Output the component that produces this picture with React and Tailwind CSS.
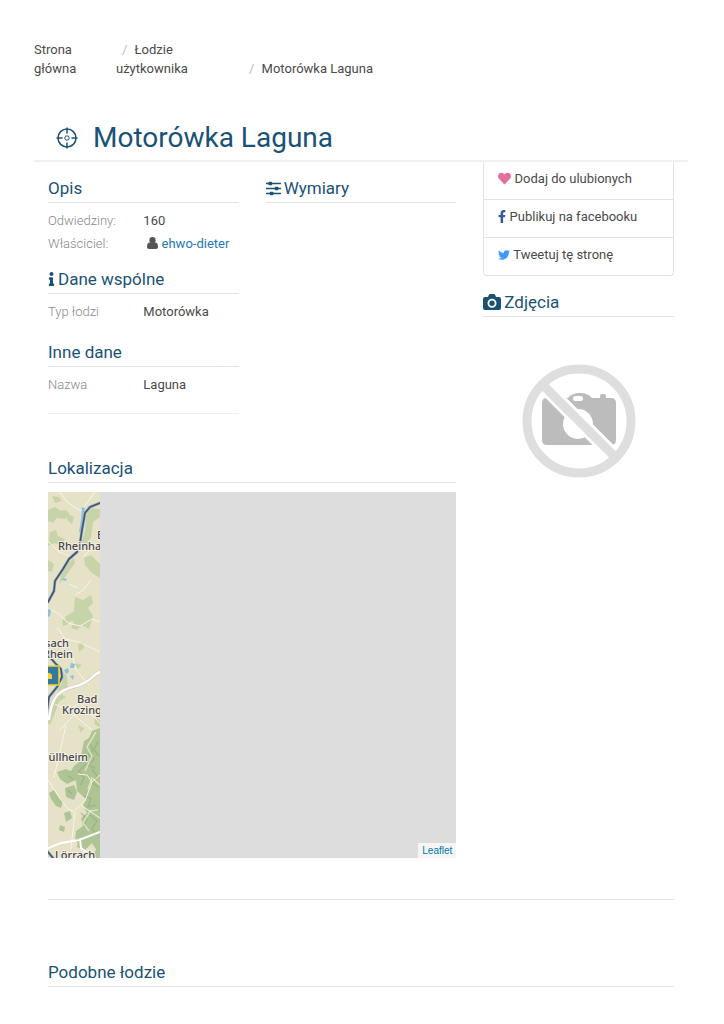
import { FaHeart, FaFacebookF, FaTwitter, FaInfo } from 'react-icons/fa'

const breadcrumbs = [
  { label: 'Strona główna', className: 'w-[82px] pr-6' },
  { label: 'Łodzie użytkownika', className: 'w-[127px] pr-4' },
  { label: 'Motorówka Laguna', className: '' }
]

const shareLinks = [
  { label: 'Dodaj do ulubionych', icon: <FaHeart className="inline size-[13px] align-[-2px] text-[#e0709f]" /> },
  { label: 'Publikuj na facebooku', icon: <FaFacebookF className="inline h-[13px] w-[8px] align-[-2px] text-[#3b5998]" /> },
  { label: 'Tweetuj tę stronę', icon: <FaTwitter className="inline size-3 align-[-2px] text-[#4099ff]" /> }
]

const CrosshairIcon = () => (
  <svg className="size-[22px] shrink-0" viewBox="0 0 22 22" fill="none" stroke="currentColor" strokeWidth="1.5">
    <circle cx="11" cy="11" r="9" />
    <circle cx="11" cy="11" r="2.2" strokeWidth="1" />
    <path d="M11 .5v6M11 15.500v6M.5 11h6M15.500 11h6" />
  </svg>
)

const SlidersIcon = () => (
  <svg className="inline size-[15px] align-[-2px]" viewBox="0 0 15 15" fill="currentColor">
    <path d="M0 1.800h15v1.400H0zM0 6.800h15v1.400H0zM0 11.800h15v1.400H0z" />
    <rect x="2.500" y=".8" width="3.600" height="3.400" rx=".7" />
    <rect x="8.800" y="5.800" width="3.600" height="3.400" rx=".7" />
    <rect x="3.800" y="10.800" width="3.600" height="3.400" rx=".7" />
  </svg>
)

const CameraIcon = () => (
  <svg className="inline h-[17px] w-[18px] align-[-2px]" viewBox="0 0 18 17">
    <path d="M2 3h3l.8-2Q6.200 0 7.300 0h3.400q1.100 0 1.500 1l.8 2h3q2 0 2 2v9q0 2-2 2H2q-2 0-2-2V5q0-2 2-2z" fill="currentColor" />
    <circle cx="9" cy="9.200" r="3.600" fill="none" stroke="#fff" strokeWidth="1.800" />
  </svg>
)

const UserIcon = () => (
  <svg className="inline h-3 w-[11px] align-[-1px]" viewBox="0 0 11 12" fill="#555">
    <path d="M2.900 5.600C1 5.600 0 7.200 0 9.700 0 11 .8 12 2 12h7c1.200 0 2-1 2-2.300 0-2.500-1-4.100-2.900-4.100z" />
    <ellipse cx="5.500" cy="3.300" rx="3.100" ry="3.300" />
  </svg>
)

const NoPhoto = () => (
  <svg className="size-[114px]" viewBox="0 0 114 114" role="img" aria-label="Brak zdjęcia">
    <g fill="#bcbcbc">
      <path d="M25 34h21c2-3 7-5 12-5s10 2 12 5h19q5 0 5 5v37q0 5-5 5H25q-5 0-5-5V39q0-5 5-5z" />
      <rect x="78" y="30" width="6" height="6" rx="2" />
    </g>
    <rect x="51" y="32" width="10" height="5" rx="2.500" fill="#fff" />
    <circle cx="56" cy="60" r="15" fill="#fff" />
    <path d="M20 20l74 74" stroke="#fff" strokeWidth="15" />
    <path d="M20 20l74 74" stroke="#dedede" strokeWidth="9" />
    <circle cx="57" cy="57" r="52" fill="none" stroke="#dedede" strokeWidth="9" />
  </svg>
)

const MapTile = () => (
  <svg className="block h-[366px] w-[52px] overflow-hidden" viewBox="0 0 52 366">
    <rect width="52" height="366" fill="#e6e2c8" />
    <g fill="#c7d4aa">
      <path d="M0 18l7-3 6 4 5-1 4 5-5 4-8-1-4 5-5-2zM4 4l7 1 3 4-7 2zM2 40l6-2 2 6 7 3-3 6-8-2-6 3zM20 22l6 3-2 7-5-4z" />
      <path d="M42 16l10 1v8l-7 5-2 15-6 12-4-3 4-15 1-15zM36 66l7-3 9 9v14l-8-5-7-8z" />
      <path d="M21 70l5-4 1 5-10 14-6 7 2-9zM0 68l6 4-2 8-4-1z" />
      <path d="M27 105l8 3 8-5 2 8-5 5 5 8-4 13-7-4-5 5-6-2 3-7-7 1-2-5 9-6zM14 128l6-2 1 6-6 2zM30 152l5-2 1 6-5 4zM26 171l8 2-4 4zM12 176l7 8 1 11-8 6-3-3 5-7z" />
      <path d="M5 208l8-6 5 3-7 5-5 13-4 10-2-2zM46 224l6 4v7l-5-2zM30 233l6 3-3 5z" />
    </g>
    <g fill="#afc495">
      <path d="M36 249l5-3 3-7 8-3v130h-7l3-9-5-7-8 3-8-4 1-10 7-5-2-8 6-5-4-8 3-6-9-8-1-10-7-7 5-8 6-5z" />
      <path d="M1 301l5-3 5 8 4 3-2 7-5-2-5-7zM9 280l9-3 9 4 1 7-9 4-7-5zM17 296l9-3 3 7-3 8-8-3zM16 321l6-2 2 7-6 4zM30 348l9-4 5 7-7 7-8-3zM12 333l5 2-1 5-5-2z" />
    </g>
    <g fill="none" stroke="#91ae7b" strokeWidth="1.500" opacity=".6">
      <path d="M42 252l3 6-5 5 6 4-6 6 7 3M50 249l-4 9 5 6M38 272l-7 7 5 7-4 8M44 277l5 7-4 7 6 5M36 304l7 3-3 8 8-2M33 321l6 6-3 8M42 323l7 6-5 8 5 6M20 284l5 3M20 298l4 4" />
    </g>
    <g fill="none" stroke="#dce3bc" strokeWidth="1.500">
      <path d="M48 240l-9 15 5 9-7 15M52 293l-8-7-4 11M50 318l-8 1-7 12 6 8" />
    </g>
    <g fill="none" stroke="#f8f5e7" strokeWidth="1">
      <path d="M12 0l7 10 14 9M33 19l14-19M35 65l8-8 9-4M0 49l11 11 14 5M27 103l7-4 9-11M0 117l10 4 10 10 12 3 12-7 8 3M30 96l-9-4M9 135l8 12 14 3 21 10M23 158l5 20 13 15M5 211l14 7 13-7 20 20M11 239l15-16 18 15M18 233l-7 31-5 21M0 288l11 17 9 12 7 3-4 37M27 318l10-9 7-19 8-7M34 314l18 12M44 290l-5-7-9-1" />
    </g>
    <g fill="#8ebee0">
      <path d="M34 15l3 1-1 7-3 18-2-1 2-12zM16 178l4-2 1 4-3 2zM22 184l4-1-1 5zM23 171l4 1-1 4h-4zM15 86l4 1-1 2-4-1zM0 117l3 1-1 6-2 1z" />
    </g>
    <g fill="none" strokeLinecap="round" strokeLinejoin="round">
      <path d="M52 180c-8 3-8 8-18 12-9 4-22 4-28 16-3 6-4 12-5 19" stroke="#cfcbb9" strokeWidth="4" />
      <path d="M52 180c-8 3-8 8-18 12-9 4-22 4-28 16-3 6-4 12-5 19" stroke="#fff" strokeWidth="2.500" />
      <path d="M0 356l13-5 18-3 21-8M32 347l1 9 14 10" stroke="#fff" strokeWidth="2" />
      <path d="M52 11l-10 4-5 6-3 17-2 13-3 9-8 7-6 10-8 12-1 10-6 11M0 163l7 8 6 6 1 8-5 10-8 10-2 14M0 360l5 6" stroke="#9dbccd" strokeWidth="3" />
      <path d="M52 11l-10 4-5 6-3 17-2 13-3 9-8 7-6 10-8 12-1 10-6 11M0 163l7 8 6 6 1 8-5 10-8 10-2 14M0 360l5 6" stroke="#47546b" strokeWidth="1.700" />
    </g>
    <g className="font-['Noto_Sans',sans-serif] text-[11px] font-medium" fill="#45454c" stroke="#f3f0e2" strokeWidth="2" paintOrder="stroke">
      <text x="49" y="47">E</text>
      <text x="10" y="58">Rheinhausen</text>
      <text x="21" y="155" textAnchor="end">Breisach</text>
      <text x="25" y="166" textAnchor="end">am Rhein</text>
      <text x="29" y="211">Bad</text>
      <text x="14" y="222">Krozingen</text>
      <text x="40" y="269" textAnchor="end">Müllheim</text>
      <text x="7" y="367">Lörrach</text>
    </g>
    <rect x="-8" y="174" width="19" height="19" rx="1" fill="#35789f" stroke="#f4d32b" strokeWidth="1.500" />
    <path d="M0 181h2l2 2v4H0z" fill="#f4d32b" />
  </svg>
)

const SectionTitle = ({ icon, children }) => (
  <h2 className="border-b border-[#dfe6ea] pb-[2px] text-[17px] leading-6 whitespace-nowrap text-[#1a5276]">
    {icon ? <span className="flex items-center gap-[3px]">{icon}{children}</span> : children}
  </h2>
)

const DataRow = ({ label, children }) => (
  <div className="grid grid-cols-2 leading-[23px]">
    <dt className="font-light text-[#888]">{label}</dt>
    <dd className="whitespace-nowrap">{children}</dd>
  </div>
)

const App = () => {
  return (
    <div className="pt-10 pr-9 pb-9 pl-[34px] font-[Roboto,sans-serif] text-[13px] text-[#4a4a4a]">
      <nav aria-label="Breadcrumb">
        <ol className="flex items-end leading-[19px]">
          {breadcrumbs.map((item, index) => (
            <li key={item.label} className={item.className}>
              {index > 0 && <span className="pr-1 pl-[6px] text-[#bbb]">/ </span>}
              <a href="#">{item.label}</a>
            </li>
          ))}
        </ol>
      </nav>

      <header className="mt-[34px] flex items-center gap-[15px] border-b-2 border-[#f0f0f0] pt-1 pl-[22px] text-[#1a5276]">
        <CrosshairIcon />
        <h1 className="text-[28px] leading-[44px]">Motorówka Laguna</h1>
      </header>

      <main className="px-[14px]">
        <div className="grid grid-cols-3 gap-x-[27px]">
          <div className="col-span-2 pt-[14px]">
            <div className="grid grid-cols-2 gap-x-[27px]">
              <div>
                <SectionTitle>Opis</SectionTitle>
                <dl className="mt-[6px] mb-3">
                  <DataRow label="Odwiedziny:">160</DataRow>
                  <DataRow label="Właściciel:">
                    <span className="pl-1"><UserIcon /> <a href="#" className="text-[#1f78b8]">ehwo-dieter</a></span>
                  </DataRow>
                </dl>
                <SectionTitle icon={<FaInfo className="h-[14px] w-[7px]" />}>Dane wspólne</SectionTitle>
                <dl className="mt-[6px] mb-[17px]">
                  <DataRow label="Typ łodzi">Motorówka</DataRow>
                </dl>
                <SectionTitle>Inne dane</SectionTitle>
                <dl className="mt-[6px]">
                  <DataRow label="Nazwa">Laguna</DataRow>
                </dl>
                <hr className="mt-[17px] border-[#eee]" />
              </div>
              <div>
                <SectionTitle icon={<SlidersIcon />}>Wymiary</SectionTitle>
              </div>
            </div>

            <section className="mt-[42px]">
              <SectionTitle>Lokalizacja</SectionTitle>
              <div className="relative mt-[9px] bg-[#ddd]">
                <MapTile />
                <div className="absolute right-0 bottom-0 bg-[#f5f5f5] px-1 font-['Liberation_Sans',Arial,sans-serif] text-[10px] leading-[15px]">
                  <a href="#" className="text-[#0078a8]">Leaflet</a>
                </div>
              </div>
            </section>
          </div>

          <aside>
            <ul className="rounded-b border border-t-0 border-[#e2e2e2]">
              {shareLinks.map((item) => (
                <li key={item.label} className="border-b border-[#e2e2e2] pt-[6px] pb-[9px] last:border-b-0">
                  <a href="#" className="block px-[14px] leading-[22px] whitespace-nowrap">{item.icon} {item.label}</a>
                </li>
              ))}
            </ul>
            <section className="mt-[14px]">
              <SectionTitle icon={<CameraIcon />}>Zdjęcia</SectionTitle>
              <div className="mt-[47px] flex justify-center">
                <NoPhoto />
              </div>
            </section>
          </aside>
        </div>

        <hr className="mt-[41px] mb-[60px] border-[#e5e5e5]" />
        <SectionTitle>Podobne łodzie</SectionTitle>
      </main>
    </div>
  )
}

export default App
